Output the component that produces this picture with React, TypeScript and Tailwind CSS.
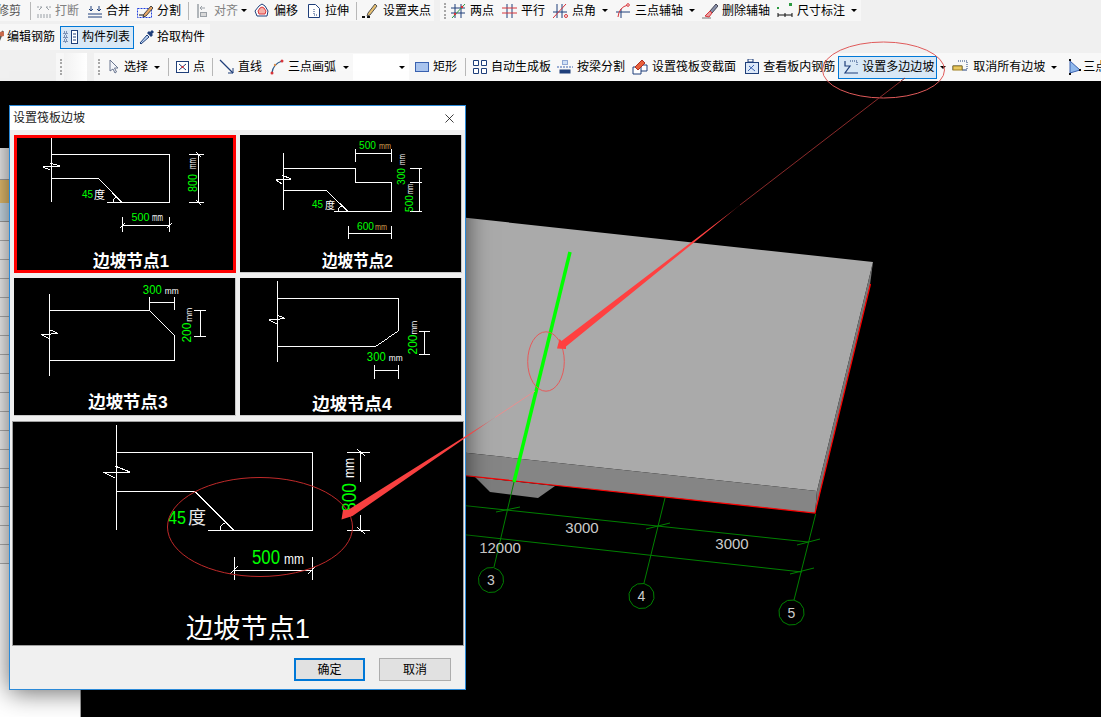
import { ReactNode } from "react";
import clsx from "clsx";
import { X } from "lucide-react";

const navy = "#1f3f7a";
const red = "#d8343a";
const slate = "#9aa0a6";

function Ic({ children }: { children: ReactNode }) {
  return (
    <svg className="w-4 h-4 shrink-0" viewBox="0 0 16 16" fill="none" strokeWidth="1">
      {children}
    </svg>
  );
}

const icons: Record<string, ReactNode> = {
  cut: (
    <Ic>
      <path d="M1 4h5M10 4h5M1 12h14M1 14h14" stroke={slate} strokeDasharray="2 1" />
      <path d="M3 7l3-3M13 7l-3-3" stroke={slate} />
    </Ic>
  ),
  merge: (
    <Ic>
      <path d="M1 11h14M1 14h14M4 3v5M12 3v5" stroke={navy} />
      <path d="M2 6l2 2 2-2M10 6l2 2 2-2" stroke={navy} />
    </Ic>
  ),
  split: (
    <Ic>
      <rect x="0.5" y="5.5" width="14" height="9" stroke="#2040e0" strokeDasharray="2 1" />
      <path d="M2 12h6" stroke="#111" />
      <path d="M7 11l7-8 2 2-7 8-3 1z" fill="#e8a868" stroke="#444" />
    </Ic>
  ),
  align: (
    <Ic>
      <path d="M2 1v14" stroke={slate} strokeWidth="1.5" />
      <path d="M4 5h5M4 5l2-2M4 5l2 2" stroke={slate} />
      <rect x="4.5" y="9.5" width="6" height="4" fill="#d8d8d8" stroke={slate} />
    </Ic>
  ),
  offset: (
    <Ic>
      <path d="M5 3l3-2 3 2 3 5-1 5H3L1 8z" fill="#fff" stroke={navy} />
      <path d="M6 5l2-1 2 1 2 3-1 3H5L4 8z" fill="#f4b0a8" stroke={red} />
    </Ic>
  ),
  stretch: (
    <Ic>
      <path d="M2.500 1.500h7l4 4v9h-11z" fill="#fff" stroke={navy} />
      <path d="M8 6v6M8 12h4" stroke={navy} strokeDasharray="1 1" />
    </Ic>
  ),
  grip: (
    <Ic>
      <path d="M0 14h3M5 14h3" stroke="#111" strokeWidth="2" />
      <path d="M6 10l7-9 2 2-7 9-3 1z" fill="#e8c070" stroke="#555" />
    </Ic>
  ),
  twoPoint: (
    <Ic>
      <path d="M4 1v14M10 1v14M0 5h14M0 10h14" stroke={navy} />
      <path d="M1 15L14 1" stroke="#2c9a40" />
      <circle cx="4" cy="11" r="1.200" fill={red} />
      <circle cx="11" cy="4" r="1.200" fill={red} />
    </Ic>
  ),
  parallel: (
    <Ic>
      <path d="M5 1v14M10 1v14" stroke={navy} />
      <path d="M0 5h15M0 10h15" stroke={red} />
    </Ic>
  ),
  angle: (
    <Ic>
      <path d="M4 1v14M9 1v14M0 9h14" stroke={navy} />
      <path d="M0 15L13 1" stroke={red} />
      <circle cx="13" cy="13" r="1.500" stroke={red} />
    </Ic>
  ),
  arcAxis: (
    <Ic>
      <path d="M1 9h14M6 6v9" stroke={navy} />
      <path d="M3 14Q4 4 13 2" stroke={red} />
      <circle cx="13" cy="2" r="1.300" stroke={red} fill="#fff" />
    </Ic>
  ),
  eraser: (
    <Ic>
      <path d="M0 15h9" stroke="#777" />
      <path d="M8 8l6-7 2 2-6 7z" fill="#8890a8" stroke="#445" />
      <path d="M3 13l5-5 2 2-3 4z" fill="#e8a0a0" stroke={red} />
    </Ic>
  ),
  dim: (
    <Ic>
      <path d="M1 12h14" stroke="#111" />
      <path d="M1 10v4M8 10v4M15 10v4" stroke="#111" />
      <rect x="0" y="4" width="2" height="2" fill="#2c9a40" />
      <rect x="12" y="0" width="3" height="3" fill="#2c9a40" />
    </Ic>
  ),
  rebar: (
    <Ic>
      <path d="M10 14L15 2" stroke="#555" strokeWidth="2" />
      <circle cx="14" cy="5" r="2.500" fill="#c8684a" />
    </Ic>
  ),
  list: (
    <Ic>
      <rect x="8.500" y="1.500" width="6" height="13" fill="#fff" stroke={navy} />
      <path d="M10 5h3M10 8h3M10 11h3" stroke={navy} />
      <path d="M1 3h3v2H1zM1 7h3v2H1zM1 11h3v2H1z" stroke={navy} strokeDasharray="1 1" />
    </Ic>
  ),
  picker: (
    <Ic>
      <path d="M2 15l-1-1 7-8 2 2z" fill="#bcd4f4" stroke={navy} />
      <path d="M8 4l4 4 2-2-1-1 2-2-2-2-2 2-1-1z" fill={navy} />
    </Ic>
  ),
  cursor: (
    <Ic>
      <path d="M2 1v11l3-2 2 4 1.500-1-2-4h3.500z" fill="#f4f6fa" stroke="#6a7690" />
    </Ic>
  ),
  point: (
    <Ic>
      <rect x="1.500" y="2.500" width="12" height="11" fill="#fff" stroke={navy} />
      <path d="M4 5l7 6M11 5l-7 6" stroke={navy} />
      <rect x="6.500" y="7" width="2" height="2" fill={red} />
    </Ic>
  ),
  line: (
    <Ic>
      <path d="M1 1l13 13" stroke={navy} strokeWidth="1.300" />
      <path d="M14 9v5H9" stroke={navy} />
    </Ic>
  ),
  arc: (
    <Ic>
      <path d="M3 14Q4 5 13 2" stroke="#2c5a8a" strokeWidth="1.300" />
      <circle cx="3" cy="14" r="1.500" fill={red} />
      <circle cx="13" cy="2" r="1.500" fill={red} />
      <circle cx="6" cy="6" r="1.200" fill="#d89050" />
    </Ic>
  ),
  rect: (
    <Ic>
      <rect x="1.500" y="3.500" width="13" height="9" fill="#a9c4ee" stroke="#3a62b0" />
    </Ic>
  ),
  grid: (
    <Ic>
      <path d="M1.500 1.500h5v5h-5zM9.500 1.500h5v5h-5zM1.500 9.500h5v5h-5zM9.500 9.500h5v5h-5z" fill="#fff" stroke={navy} />
    </Ic>
  ),
  beam: (
    <Ic>
      <rect x="5.500" y="1.500" width="5" height="4" fill="#cfe0f6" stroke="#3a62b0" strokeDasharray="1 1" />
      <path d="M0 8h16" stroke="#3a62b0" strokeDasharray="2 1" />
      <rect x="2.500" y="10.500" width="11" height="4" fill={navy} />
    </Ic>
  ),
  section: (
    <Ic>
      <path d="M1 8h8v7H1zM9 6h6v6H9" stroke={navy} fill="#fff" />
      <path d="M3 8l7-7 3 3-7 7z" fill="#e8603c" stroke="#b03020" />
    </Ic>
  ),
  viewRebar: (
    <Ic>
      <rect x="1.500" y="3.500" width="13" height="11" fill="#dce8f8" stroke={navy} />
      <path d="M4 0h5v3H4z" fill="#fff" stroke={navy} />
      <path d="M5 7l6 5M4 12l6-6" stroke="#3a62b0" />
    </Ic>
  ),
  slope: (
    <Ic>
      <path d="M2 2v5h5l-5 7h13" stroke={navy} strokeWidth="1.200" />
      <path d="M7 2h7v4" stroke={navy} strokeDasharray="1 1" />
    </Ic>
  ),
  clearSlope: (
    <Ic>
      <path d="M6 2h9v9" stroke={navy} strokeDasharray="1 1" />
      <path d="M1 11V7h9v4h5" stroke={navy} />
      <rect x="1" y="7" width="9" height="4" fill="#e8c860" stroke="#a08020" />
    </Ic>
  ),
  triangle: (
    <Ic>
      <path d="M3 2v12l10-3z" fill="#8fb8ec" stroke="#3a62b0" />
      <rect x="2" y="0" width="2" height="2" fill="#111" />
      <rect x="2" y="14" width="2" height="2" fill="#111" />
      <rect x="12" y="10" width="2" height="2" fill="#111" />
    </Ic>
  ),
};

function Tool({
  icon,
  label,
  muted,
  className,
}: {
  icon: string;
  label: string;
  muted?: boolean;
  className?: string;
}) {
  return (
    <div className={clsx("flex items-center shrink-0", className ?? "gap-[3px]", muted && "text-[#808080]")}>
      {icons[icon]}
      <span>{label}</span>
    </div>
  );
}

function Caret({ className }: { className?: string }) {
  return <span className={clsx("w-0 h-0 shrink-0 border-x-[3px] border-t-[3px] border-x-transparent border-t-black", className)} />;
}

function Sep({ className }: { className?: string }) {
  return <span className={clsx("w-px h-[18px] shrink-0 bg-[#b8b8b8]", className)} />;
}

function Grip() {
  return <span className="w-[2px] h-[16px] shrink-0 border-l-2 border-dotted border-[#a8a8a8]" />;
}

function Toolbars() {
  return (
    <div className="h-[81px] shrink-0 flex flex-col text-xs text-black bg-[#f0f0f0] whitespace-nowrap overflow-hidden">
      <div className="h-[21px] flex items-center">
        <div className="w-[434px] h-full flex items-center shrink-0 bg-[#f7f7f7] pr-[5px]">
          <span className="-ml-[3px] text-[#555555]">修剪</span>
          <Sep className="ml-[9px]" />
          <Tool icon="cut" label="打断" muted className="ml-[5px] gap-[3px]" />
          <Tool icon="merge" label="合并" className="ml-[8px] gap-[3px]" />
          <Tool icon="split" label="分割" className="ml-[7px] gap-[4px]" />
          <Sep className="ml-[7px]" />
          <Tool icon="align" label="对齐" muted className="ml-[7px] gap-[2px]" />
          <Caret className="ml-[3px] border-t-[#808080]" />
          <Tool icon="offset" label="偏移" className="ml-[7px] gap-[4px]" />
          <Tool icon="stretch" label="拉伸" className="ml-[8px] gap-[3px]" />
          <Sep className="ml-[7px]" />
          <Tool icon="grip" label="设置夹点" className="ml-[5px] gap-[5px]" />
        </div>
        <div className="ml-[6px] w-[421px] h-full flex items-center bg-[#f7f7f7] pl-[4px]">
          <Grip />
          <Tool icon="twoPoint" label="两点" className="ml-[5px] gap-[3px]" />
          <Tool icon="parallel" label="平行" className="ml-[8px] gap-[3px]" />
          <Tool icon="angle" label="点角" className="ml-[8px] gap-[3px]" />
          <Caret className="ml-[6px]" />
          <Tool icon="arcAxis" label="三点辅轴" className="ml-[7px] gap-[4px]" />
          <Caret className="ml-[6px]" />
          <Tool icon="eraser" label="删除辅轴" className="ml-[7px] gap-[4px]" />
          <Tool icon="dim" label="尺寸标注" className="ml-[7px] gap-[4px]" />
          <Caret className="ml-[6px]" />
        </div>
      </div>

      <div className="mt-[3px] h-[26px] w-[210px] flex items-center bg-[#f7f7f7]">
        <Tool icon="rebar" label="编辑钢筋" className="-ml-[12px] gap-[3px]" />
        <div className="ml-[5px] w-[74px] h-[23px] flex items-center gap-[3px] shrink-0 border border-[#0078d7] bg-[#d8e8f6] pl-[2px]">
          {icons.list}
          <span>构件列表</span>
        </div>
        <Tool icon="picker" label="拾取构件" className="ml-[5px] gap-[2px]" />
      </div>

      <div className="mt-[3px] h-[28px] flex items-center">
        <div className="ml-[56px] w-[31px] h-full flex items-center shrink-0 pl-[4px] bg-[#f7f7f7]">
          <Grip />
          <span className="ml-[2px] flex-1 h-full bg-linear-to-r from-[#f2f2f2] to-white" />
        </div>
        <div className="ml-[7px] flex-1 h-full flex items-center pl-[4px] bg-[#f8f8f8] overflow-hidden">
          <Grip />
          <Tool icon="cursor" label="选择" className="ml-[8px] gap-0" />
          <Caret className="ml-[6px]" />
          <Sep className="ml-[8px]" />
          <Tool icon="point" label="点" className="ml-[6px] gap-[2px]" />
          <Sep className="ml-[7px]" />
          <Tool icon="line" label="直线" className="ml-[6px] gap-[3px]" />
          <Tool icon="arc" label="三点画弧" className="ml-[7px] gap-[3px]" />
          <Caret className="ml-[7px]" />
          <div className="ml-[4px] w-[56px] h-[26px] flex items-center justify-end shrink-0 pr-[4px] bg-white">
            <Caret />
          </div>
          <Tool icon="rect" label="矩形" className="ml-[5px] gap-[3px]" />
          <Sep className="ml-[8px]" />
          <Tool icon="grid" label="自动生成板" className="ml-[6px] gap-[3px]" />
          <Tool icon="beam" label="按梁分割" className="ml-[6px] gap-[4px]" />
          <Tool icon="section" label="设置筏板变截面" className="ml-[7px] gap-[4px]" />
          <Tool icon="viewRebar" label="查看板内钢筋" className="ml-[8px] gap-[3px]" />
          <div className="ml-[3px] w-[99px] h-[23px] flex items-center gap-[3px] shrink-0 border border-[#0078d7] bg-[#d8e8f6] pl-[4px]">
            {icons.slope}
            <span>设置多边边坡</span>
          </div>
          <Caret className="ml-[3px]" />
          <Tool icon="clearSlope" label="取消所有边坡" className="ml-[6px] gap-[5px]" />
          <Caret className="ml-[6px]" />
          <Tool icon="triangle" label="三点" className="ml-[10px] gap-0" />
        </div>
      </div>
    </div>
  );
}

function MemberList() {
  const rows = Array.from({ length: 18 }, (_, i) => i);
  return (
    <div className="w-[81px] shrink-0 flex flex-col bg-black">
      <div className="h-[67px] shrink-0" />
      <div className="flex-1 bg-white border-r border-[#a0a0a0]">
        <div className="h-[32px] bg-[#f0f0f0] border-b border-[#a0a0a0]" />
        <div className="h-[23px] bg-[#e8c070]" />
        <div className="h-[19px] bg-[#cfe0ec] border-b border-[#a0a0a0]" />
        {rows.map((i) => (
          <div key={i} className="h-[19px] border-b border-[#b0b0b0] bg-[#f4f4f4]" />
        ))}
      </div>
    </div>
  );
}

function AxisMark({ x, y, n }: { x: number; y: number; n: string }) {
  // the CAD view draws its axis bubbles as coarse polygons
  const pts = Array.from({ length: 12 }, (_, i) => {
    const a = (i * Math.PI) / 6 + 0.2;
    return `${x + 12.7 * Math.cos(a)},${y + 12.7 * Math.sin(a)}`;
  }).join(" ");
  return (
    <g>
      <polygon points={pts} fill="none" stroke="#008000" />
      <text x={x} y={y + 5} textAnchor="middle" fontSize="14" fill="#cccccc">
        {n}
      </text>
    </g>
  );
}

function Canvas() {
  return (
    <svg className="flex-1 h-full bg-black" viewBox="81 81 1020 636">
      <path d="M475 477L490 492L538 498L555 486Z" fill="#7d7d7d" />
      <path d="M440 215L873 262L817 491L440 450Z" fill="#aaaaaa" />
      <path d="M440 450L817 491L815 513L440 473Z" fill="#858585" />
      <path d="M873 262L870 285L815 513L817 491Z" fill="#777777" />
      <path d="M440 473L815 513L870.500 284" fill="none" stroke="#ff0000" strokeWidth="1.200" />
      <path d="M570 252L514 482" stroke="#00ff00" strokeWidth="3.500" />
      <g stroke="#008000" fill="none">
        <path d="M514 482L494 567M665 498L644 583M815.700 514L794 600" />
        <path d="M440 503L808 542M440 532L802 572" />
        <path d="M496 512L520 507M646 529L670 523M797 545L820 539M790 574L814 568" />
      </g>
      <g fontSize="15" fill="#cccccc" textAnchor="middle">
        <text x="582" y="533">3000</text>
        <text x="500" y="553">12000</text>
        <text x="732" y="549">3000</text>
      </g>
      <AxisMark x={491} y={580} n="3" />
      <AxisMark x={641.500} y={596} n="4" />
      <AxisMark x={791.500} y={612.500} n="5" />
    </svg>
  );
}

function Txt({
  x,
  y,
  t,
  w,
  size = 11,
  fill = "#00ff00",
  rot,
}: {
  x: number;
  y: number;
  t: string;
  w?: number;
  size?: number;
  fill?: string;
  rot?: boolean;
}) {
  return (
    <text
      x={x}
      y={y}
      fontSize={size}
      fill={fill}
      textLength={w}
      lengthAdjust={w ? "spacingAndGlyphs" : undefined}
      transform={rot ? `rotate(-90 ${x} ${y})` : undefined}
    >
      {t}
    </text>
  );
}

function Caption({ x, y, t, w }: { x: number; y: number; t: string; w: number }) {
  return (
    <text x={x} y={y} fontSize="17" fontWeight="700" fill="#ffffff" textLength={w} lengthAdjust="spacingAndGlyphs">
      {t}
    </text>
  );
}

const orangeMm = "#d8a050";

function Slope1() {
  return (
    <svg className="block w-full h-full" viewBox="17 138 216 132" shapeRendering="crispEdges">
      <path
        d="M51.500 138V202M52 154.500H169.500V202.500H107M52 178.500H98.500L122 202.500M50 163L60 166L43 167L50 170M113 202Q113 198 117 197"
        fill="none"
        stroke="#fff"
      />
      <path
        d="M198.500 154V202M189 154.500H204M189 202.500H204M196 152L201 157M196 200L201 205M122.500 225.500H169.500M122.500 217V232M169.500 217V232M120 228L125 223M167 228L172 223"
        fill="none"
        stroke="#fff"
      />
      <Txt x={82} y={198} t="45" w={11} />
      <Txt x={94} y={199} t="度" size={11} fill="#fff" />
      <Txt x={197} y={192} t="800" w={18} size={12} rot />
      <Txt x={196} y={169} t="mm" w={11} size={10} fill="#fff" rot />
      <Txt x={131.500} y={221} t="500" w={18} />
      <Txt x={152} y={221} t="mm" w={11} size={10} fill="#fff" />
      <Caption x={93} y={267} t="边坡节点1" w={76} />
    </svg>
  );
}

function Slope2() {
  return (
    <svg className="block w-full h-full" viewBox="240 135 221 137" shapeRendering="crispEdges">
      <path
        d="M283.500 153V210M283.500 168.500H355.500V182.500H391.500V211.500H334M283.500 190.500H326.500L348 211.500M282 175L291 179L276 180L282 184M338 211Q338 207 342 206"
        fill="none"
        stroke="#fff"
      />
      <path
        d="M355.500 153.500H391.500M355.500 149V162M391.500 149V162M419.500 168V212M410 168.500H422M410 182.500H422M410 211.500H422M348 233.500H391.500M348 226V239M391.500 226V239"
        fill="none"
        stroke="#fff"
      />
      <Txt x={312} y={208} t="45" w={11} />
      <Txt x={325} y={209} t="度" size={10} fill="#fff" />
      <Txt x={359} y={149} t="500" w={17} />
      <Txt x={379} y={149} t="mm" w={12} size={9} fill={orangeMm} />
      <Txt x={405} y={185} t="300" w={17} rot />
      <Txt x={405} y={165} t="mm" w={11} size={9} fill="#fff" rot />
      <Txt x={413} y={212} t="500" w={17} rot />
      <Txt x={413} y={194} t="mm" w={10} size={9} fill="#fff" rot />
      <Txt x={357} y={230} t="600" w={17} />
      <Txt x={375} y={230} t="mm" w={12} size={9} fill={orangeMm} />
      <Caption x={322} y={267} t="边坡节点2" w={71} />
    </svg>
  );
}

function Slope3() {
  return (
    <svg className="block w-full h-full" viewBox="14 278 221 138" shapeRendering="crispEdges">
      <path
        d="M48.500 294V377M48.500 310.500H149L174.500 336V361.500H48.500M49 330L58 334L40 335L49 339"
        fill="none"
        stroke="#fff"
      />
      <path d="M149.500 302.500H174.500M149.500 297V310M174.500 297V310M201.500 310V336M195 310.500H207M195 336.500H207" fill="none" stroke="#fff" />
      <Txt x={143} y={294} t="300" w={19} size={12} />
      <Txt x={165} y={294} t="mm" w={14} size={10} fill="#fff" />
      <Txt x={192} y={343} t="200" w={20} size={12} rot />
      <Txt x={192} y={322} t="mm" w={14} size={10} fill="#fff" rot />
      <Caption x={88} y={409} t="边坡节点3" w={80} />
    </svg>
  );
}

function Slope4() {
  return (
    <svg className="block w-full h-full" viewBox="240 278 221 138" shapeRendering="crispEdges">
      <path d="M276.500 281V363M276.500 298.500H398.500V331.500L375 347.500H276.500M276 315L285 319L268 320L276 324" fill="none" stroke="#fff" />
      <path d="M374.500 371.500H398.500M374.500 366V380M398.500 366V380M425.500 331V355M419 331.500H431M419 355.500H431" fill="none" stroke="#fff" />
      <Txt x={367} y={362} t="300" w={19} size={12} />
      <Txt x={389} y={362} t="mm" w={14} size={10} fill="#fff" />
      <Txt x={417} y={355} t="200" w={20} size={12} rot />
      <Txt x={417} y={335} t="mm" w={14} size={10} fill="#fff" rot />
      <Caption x={312} y={411} t="边坡节点4" w={80} />
    </svg>
  );
}

function SlopeLarge() {
  return (
    <svg className="block w-full h-full" viewBox="13 422 450 223">
      <g shapeRendering="crispEdges" fill="none" stroke="#fff">
        <path d="M116.500 425V530M116 452.500H312.500V530.500H208M116 491.500H195L234 530.500M103 472L130 472L115 466M103 472L115 478M220 530Q220 525 225 523" />
        <path d="M360.500 452V482M360.500 515V530M347 452.500H370M347 530.500H370M357 449L365 456M357 527L365 534M234 570.500H312.500M234.500 557V580M312.500 557V580M230 574L238 566M308 574L316 566" />
      </g>
      <Txt x={168} y={524} t="45" w={18} size={19} />
      <text x={188} y={524} fontSize="18" fill="#e8e8e8">
        度
      </text>
      <Txt x={356} y={512} t="800" w={29} size={20} rot />
      <Txt x={354} y={478} t="mm" w={20} size={14} fill="#fff" rot />
      <Txt x={252} y={564} t="500" w={28} size={20} />
      <Txt x={284} y={564} t="mm" w={20} size={14} fill="#fff" />
      <text x={186} y={638} fontSize="27" fill="#ffffff" textLength={124} lengthAdjust="spacingAndGlyphs">
        边坡节点1
      </text>
    </svg>
  );
}

function SlopeDialog() {
  return (
    <div className="absolute left-[9px] top-[105px] z-10 w-[457px] h-[585px] flex flex-col border border-[#2b8ad8] bg-[#f0f0f0] shadow-[0_2px_24px_rgba(0,0,0,0.6)]">
      <div className="h-[24px] shrink-0 flex items-center justify-between bg-white pl-[3px] pr-[8px] text-xs text-[#222222]">
        <span>设置筏板边坡</span>
        <X size={15} strokeWidth={1.2} className="text-black" />
      </div>
      <div className="grid grid-cols-[222px_222px] grid-rows-[138px_138px] gap-x-[4px] gap-y-[5px] px-[4px] pt-[5px]">
        <div className="bg-black border-[3px] border-[#ff0000]">
          <Slope1 />
        </div>
        <div className="bg-black border-r border-b border-[#c8c8c8]">
          <Slope2 />
        </div>
        <div className="bg-black border-r border-b border-[#c8c8c8]">
          <Slope3 />
        </div>
        <div className="bg-black border-r border-b border-[#c8c8c8]">
          <Slope4 />
        </div>
      </div>
      <div className="mt-[5px] ml-[2px] w-[452px] h-[225px] shrink-0 bg-black border border-[#a0a0a0]">
        <SlopeLarge />
      </div>
      <div className="flex justify-end gap-[14px] pt-[12px] pr-[14px] text-xs text-black">
        <button className="w-[71px] h-[23px] border-2 border-[#0078d7] bg-[#e1e1e1]">确定</button>
        <button className="w-[72px] h-[23px] border border-[#adadad] bg-[#e1e1e1]">取消</button>
      </div>
    </div>
  );
}

// callouts drawn over the toolbar and dialog, page coordinates
function Annotations() {
  return (
    <svg className="absolute inset-0 z-20 pointer-events-none" width="1101" height="717" viewBox="0 0 1101 717" fill="none">
      <ellipse cx="883.500" cy="70" rx="61" ry="28" stroke="#e05a5a" />
      <ellipse cx="546" cy="361.500" rx="18.300" ry="29.700" stroke="#e65a5a" />
      <ellipse cx="260" cy="527" rx="92.500" ry="49.500" stroke="#c02a2a" />
      <path d="M905 78L740 205" stroke="#8a2a2a" />
      <path d="M745 201L735 209L561.500 341L559.500 339L557 348.500L566 349L566 346.500Z" fill="#ff4040" />
      <path d="M535 391L495 417.500" stroke="#e89090" />
      <path d="M497 416L488 422L348 510L343 510L341.500 519.500L352.500 516Z" fill="#f84040" />
    </svg>
  );
}

export default function App() {
  return (
    <div className="relative w-[1101px] h-[717px] flex flex-col overflow-hidden bg-black font-['Liberation_Sans','Noto_Sans_CJK_SC',sans-serif]">
      <Toolbars />
      <div className="flex-1 flex min-h-0">
        <MemberList />
        <Canvas />
      </div>
      <SlopeDialog />
      <Annotations />
    </div>
  );
}
